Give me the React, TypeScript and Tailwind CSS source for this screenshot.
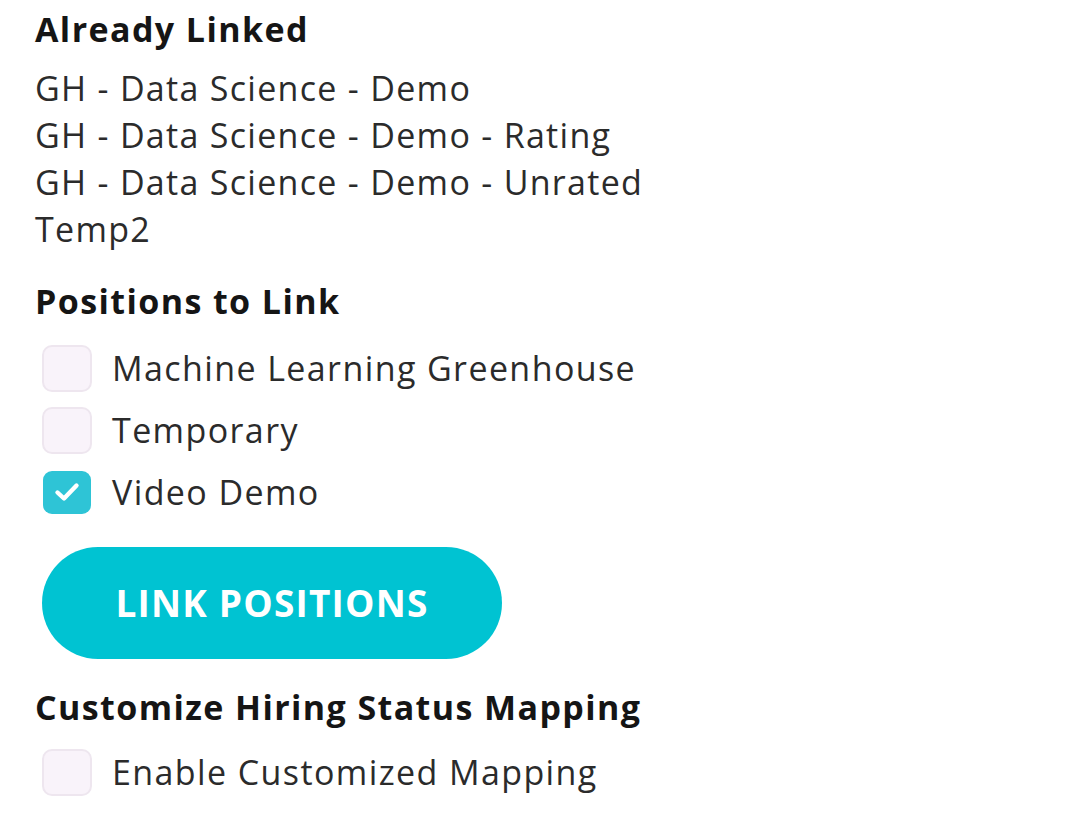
import React from "react";

function Box({ checked }: { checked?: boolean }) {
  if (checked) {
    return (
      <div className="flex h-[47px] w-[50px] items-center justify-center">
        <div className="flex h-[43px] w-[48px] items-center justify-center rounded-[9px] bg-[#2ec4d6]">
          <svg width="28" height="24" viewBox="0 0 28 24" fill="none">
            <path d="M4.5 12.5l6.5 6L23.5 5.5" stroke="#ffffff" strokeWidth="4.4" strokeLinecap="round" strokeLinejoin="round" />
          </svg>
        </div>
      </div>
    );
  }
  return <div className="h-[47px] w-[50px] rounded-[10px] border-2 border-[#eee6ef] bg-[#f9f3fa]" />;
}

function Row({ label, checked }: { label: string; checked?: boolean }) {
  return (
    <div className="flex h-[62px] items-center gap-[20px] pl-[7px]">
      <Box checked={checked} />
      <span className="text-[34px] tracking-[1.4px] text-[#2b2b2b]">{label}</span>
    </div>
  );
}

export default function App() {
  return (
    <div
      className="min-h-[828px] w-[1085px] bg-white pl-[35px] pt-[7px]"
      style={{ fontFamily: '"Open Sans", "Noto Sans", sans-serif' }}
    >
      <h2 className="text-[34px] font-bold leading-[44px] tracking-[1.4px] text-[#151515]">Already Linked</h2>
      <div className="mt-[14px] text-[34px] leading-[47px] tracking-[1.3px] text-[#2b2b2b]">
        <div>GH - Data Science - Demo</div>
        <div>GH - Data Science - Demo - Rating</div>
        <div>GH - Data Science - Demo - Unrated</div>
        <div>Temp2</div>
      </div>
      <h2 className="mt-[26px] text-[34px] font-bold leading-[44px] tracking-[1.4px] text-[#151515]">Positions to Link</h2>
      <div className="mt-[14px] flex flex-col">
        <Row label="Machine Learning Greenhouse" />
        <Row label="Temporary" />
        <Row label="Video Demo" checked />
      </div>
      <button className="mt-[24px] ml-[7px] flex h-[112px] w-[460px] items-center justify-center rounded-full bg-[#00c3d2] text-[37px] font-bold tracking-[1.2px] text-white">
        LINK POSITIONS
      </button>
      <h2 className="mt-[26px] text-[34px] font-bold leading-[44px] tracking-[1.4px] text-[#151515]">Customize Hiring Status Mapping</h2>
      <div className="mt-[12px]">
        <Row label="Enable Customized Mapping" />
      </div>
    </div>
  );
}
